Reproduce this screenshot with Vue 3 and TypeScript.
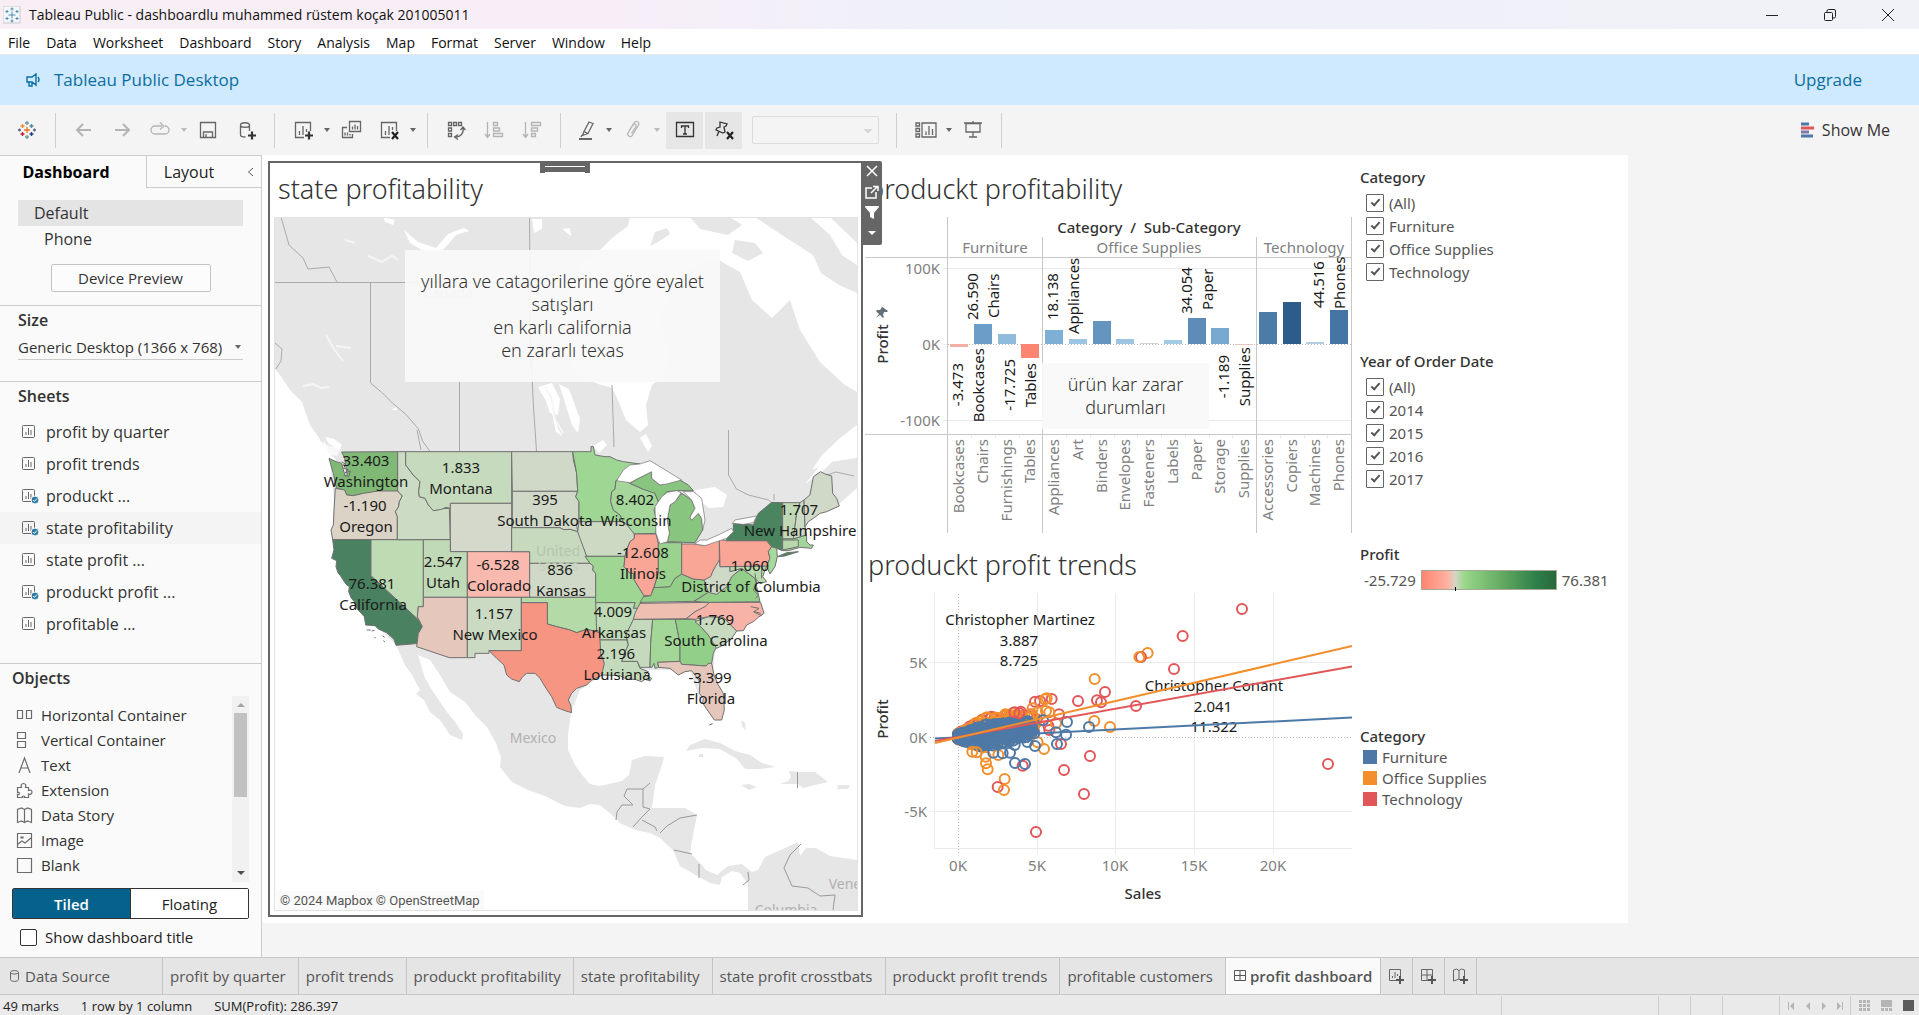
<script setup lang="ts">
interface Shape { p: string; c: string }
interface Label { x: number; y: number; t: string }
interface Tool { icon?: string; caret?: boolean; sep?: boolean; dim?: boolean; on?: boolean; narrow?: boolean; label?: string }

const menu = ['File', 'Data', 'Worksheet', 'Dashboard', 'Story', 'Analysis', 'Map', 'Format', 'Server', 'Window', 'Help']

const icons: Record<string, string> = {
  back: 'M18 11H4M10 5l-6 6 6 6',
  forward: 'M4 11h14M12 5l6 6-6 6',
  redo: 'M13 7H6a4 4 0 0 0 0 8h10a4 4 0 0 0 4-4 4 4 0 0 0-4-4M11 3.500l4 3.500-4 3.500',
  save: 'M3.500 3.500h15v15h-15zM6.500 18v-5h9v5M9 15v3',
  dataAdd: 'M5.500 6c0-3 9-3 9 0s-9 3-9 0v10c0 1 2 2 5 2M14.500 6v6',
  sheetAdd: 'M12 18.500H3.500v-15h15V12M7.500 16v-4M11 16V7M14.500 13v-3',
  duplicate: 'M9.500 2.500h11v10h-11zM12.500 10.500v-3M15 10.500v-5M17.500 10.500V7M7 8.500H2.500v10h10V15M5 16.500v-3M7.500 16.500v-3M10 16.500V15',
  clear: 'M12 18.500H3.500v-15h15V12M7.500 16v-4M11 16V7M14.500 11v-3',
  swap: 'M3.500 3.500h3v3h-3zM8.500 3.500h3v3h-3zM13.500 3.500h3v3h-3zM3.500 9h3v3h-3zM3.500 14.500h3v3h-3zM18 9c1 5-2 9-8 9M15.500 11l2.500-3 2.500 3M13 15.500L9.500 18l3.500 2.500',
  sortAsc: 'M4.500 3v15M2 15l2.500 3.500L7 15M10.500 3.500h4v3h-4zM10.500 9h6v3h-6zM10.500 14.500h9v3h-9z',
  sortDesc: 'M4.500 3v15M2 15l2.500 3.500L7 15M10.500 3.500h9v3h-9zM10.500 9h6v3h-6zM10.500 14.500h4v3h-4z',
  highlight: 'M13 3l4 1.500-5 10-4-2zM8 12.500l-1.500 4 5.500-2M6 16l-1 2',
  clip: 'M7 12l5-8c2-3 6-1 4.500 2l-6 10c-1.500 3-6 1-4.500-2l5-8c1.500-2 4-.5 3 1.500l-4.500 7',
  label: 'M2.500 3.500h17v14h-17zM7.500 9V7h7v2M11 7v8M9 15h4',
  pin: 'M7 3l7 2-1 2-2 1 1 5-2 1-7-3 1-2 3-1zM6 12l-2 5',
  showHide: 'M2 4h3.500v3H2zM2 9.500h3.500v3H2zM2 15h3.500v3H2zM8 4h14v14H8zM12 16v-3.500M15 16V7M18.500 16v-6',
  present: 'M2 4h18M4 4.500h14v8.500H4zM11 2v2M11 13v5M7 18h8',
}
const tools: Tool[] = [
  { icon: 'back', dim: true, label: 'Undo' }, { icon: 'forward', dim: true, label: 'Redo' },
  { icon: 'redo', dim: true, label: 'Replay' }, { caret: true, dim: true }, { icon: 'save', label: 'Save' },
  { icon: 'dataAdd', label: 'New data source' }, { sep: true },
  { icon: 'sheetAdd', label: 'New worksheet' }, { caret: true }, { icon: 'duplicate', label: 'Duplicate' },
  { icon: 'clear', label: 'Clear' }, { caret: true }, { sep: true },
  { icon: 'swap', label: 'Swap' }, { icon: 'sortAsc', dim: true, label: 'Sort ascending' },
  { icon: 'sortDesc', dim: true, label: 'Sort descending' }, { sep: true },
  { icon: 'highlight', narrow: true, label: 'Highlight' }, { caret: true }, { icon: 'clip', dim: true, label: 'Group' },
  { caret: true, dim: true }, { icon: 'label', on: true, label: 'Show labels' }, { icon: 'pin', on: true, label: 'Fix axes' },
]

const sheets = [
  { t: 'profit by quarter', used: false }, { t: 'profit trends', used: false }, { t: 'produckt ...', used: true },
  { t: 'state profitability', used: true }, { t: 'state profit ...', used: false },
  { t: 'produckt profit ...', used: true }, { t: 'profitable ...', used: false },
]
const objects = [
  { t: 'Horizontal Container', d: 'M1.500 4.500h5v8h-5zM10.500 4.500h5v8h-5z' },
  { t: 'Vertical Container', d: 'M1.500 1.500h8v6h-8zM1.500 10.500h8v6h-8z' },
  { t: 'Text', d: 'M3 17L8.500 2 14 17M5 12h7' },
  { t: 'Extension', d: 'M1.500 6.500h4c-1-2 0-4 2-4s3 2 2 4h3v3c2-1 3.500 0 3.500 1.500S14.500 14 12.500 13v3.500H8.500c1-2-3-2-2 0h-5v-3c2 1 3-3 0-2z' },
  { t: 'Data Story', d: 'M8.500 3.500l-3-1.500-4 1.500v13l4-1.500 3 1.500 3-1.500 4 1.500v-13l-4-1.500zM8.500 3.500v13' },
  { t: 'Image', d: 'M1.500 2.500h14v14h-14zM2 13l4-3 3 2 6-5M5 6h2v1H5z' },
  { t: 'Blank', d: 'M1.500 2.500h14v14h-14z' },
]
const tabs = ['profit by quarter', 'profit trends', 'produckt profitability', 'state profitability', 'state profit crosstbats', 'produckt profit trends', 'profitable customers']

const west: Shape[] = [
  { p: '57,85 78,95 95,100 100,120 106,138 112,136 108,112 104,85 95,66 263,65 263,183 240,186 205,183 190,188 160,190 130,197 110,195 104,180 80,175 77,165 70,130', c: '#80b876' },
  { p: '76,175 104,180 110,195 130,197 160,190 205,183 263,183 277,198 268,215 266,230 256,245 262,260 262,329 68,329 63,300 70,285 72,240', c: '#dbd3c5' },
  { p: '68,329 183,329 183,437 328,572 337,590 325,610 329,640 258,646 252,628 230,608 205,597 195,587 167,585 163,560 140,535 133,515 124,505 116,485 118,470 108,463 90,435 84,428 78,410 80,392 65,385 72,360', c: '#4a8160' },
  { p: '183,329 340,329 340,530 325,530 322,560 328,572 183,437', c: '#bfdbb4' },
  { p: '263,65 287,65 287,105 310,135 330,155 326,185 328,200 345,205 355,225 370,242 395,236 418,235 421,329 262,329 262,260 256,245 266,230 268,215 277,198 263,183', c: '#ccdbc3' },
  { p: '287,65 605,65 605,220 421,220 421,235 408,232 395,238 370,242 355,225 345,205 328,200 326,185 330,155 310,135 287,105', c: '#c6dabd' },
  { p: '421,220 605,220 605,365 421,365', c: '#d4d9cb' },
  { p: '340,329 421,329 421,365 472,365 472,502 340,502', c: '#c0d9b6' },
  { p: '472,365 659,365 659,502 472,502', c: '#f9b9ae' },
  { p: '340,502 472,502 472,683 418,683 320,650 325,610 337,590 322,560 325,530 340,530', c: '#e5c8bb' },
  { p: '472,502 634,502 634,662 537,662 537,670 495,670 495,683 472,683', c: '#cbdbc3' },
  { p: '605,65 788,65 790,90 800,130 803,184 607,184', c: '#d0d9c7' },
  { p: '607,184 803,184 797,200 807,215 807,275 800,285 803,305 780,298 760,299 750,293 607,293', c: '#d0d9c7' },
  { p: '605,293 750,293 760,299 780,298 803,305 815,325 825,360 832,385 840,400 659,400 659,365 605,365', c: '#c7dabd' },
  { p: '659,400 840,400 850,408 848,420 857,430 857,502 659,502', c: '#d0d9c7' },
  { p: '634,502 857,502 862,560 860,605 830,598 800,608 780,600 740,590 712,582 712,518 634,518', c: '#b4daa8' },
  { p: '634,518 712,518 712,582 740,590 780,600 800,608 830,598 860,605 871,610 872,670 884,700 878,735 845,750 830,765 800,775 785,790 775,810 782,825 785,848 765,842 740,832 725,800 705,770 690,745 675,730 650,730 638,740 628,755 605,747 590,735 582,705 560,685 537,662 634,662', c: '#f69682' },
]
const east: Shape[] = [
  { p: '-22,65 33,65 33,50 40,50 45,75 75,80 90,80 110,90 130,95 180,102 150,120 108,152 105,178 95,185 92,215 100,240 120,255 130,275 -3,275 -3,215 -13,200 -7,184 -10,130', c: '#9ed693' },
  { p: '108,152 130,150 150,160 190,178 215,182 225,190 235,215 222,240 230,270 228,310 163,312 150,300 145,290 130,275 120,255 100,240 92,215 95,185 105,178', c: '#a5d69a' },
  { p: '-3,275 130,275 145,290 163,312 163,325 150,335 140,360 135,379 20,379 0,325 -7,305', c: '#ccdac3' },
  { p: '15,379 135,379 132,410 150,430 162,430 160,445 178,475 192,497 188,515 180,535 160,535 165,518 47,518 47,430 38,420 40,408 30,400', c: '#a0d694' },
  { p: '47,518 165,518 160,535 180,535 175,548 160,570 145,600 138,610 140,630 60,630 60,605 50,602', c: '#bfdbb5' },
  { p: '60,630 140,630 145,645 138,660 125,694 172,694 180,715 205,725 195,735 215,745 210,753 195,748 185,755 165,748 140,748 120,737 65,735 73,700 62,670', c: '#c3dabb' },
  { p: '160,568 218,568 212,640 210,712 180,712 172,694 125,694 138,660 145,645 138,610 145,600', c: '#c5dabd' },
  { p: '218,568 286,568 300,640 300,694 233,697 236,712 225,715 222,700 216,712 210,712 212,640', c: '#a3d798' },
  { p: '286,568 345,568 362,590 385,615 410,650 400,670 395,700 385,702 378,708 305,703 300,694 300,640', c: '#92cf88' },
  { p: '233,697 300,694 305,703 378,708 385,700 395,700 402,735 415,765 430,790 433,840 425,870 403,870 375,830 368,818 370,805 358,790 360,755 335,722 315,725 295,735 270,715 236,712', c: '#e4c7ba' },
  { p: '345,575 385,560 430,562 470,603 455,625 430,645 410,655 385,615 362,590', c: '#c8dbc0' },
  { p: '388,517 542,517 552,550 535,562 520,575 500,585 490,602 470,603 430,562 385,560 345,568 318,566 345,545', c: '#f7b3a8' },
  { p: '180,520 388,517 375,530 345,545 318,566 160,568 165,550', c: '#efbfb2' },
  { p: '180,518 190,500 212,497 222,473 270,470 285,445 305,432 340,447 372,450 385,487 342,514 190,517', c: '#93ce89' },
  { p: '342,514 365,500 385,487 410,490 440,470 455,440 485,415 505,430 525,445 530,470 540,515 388,517', c: '#94cf8a' },
  { p: '418,385 420,410 450,410 450,425 485,415 455,440 440,470 410,493 385,487 372,450 400,420', c: '#cfd9c8' },
  { p: '450,410 560,408 548,440 560,455 540,460 525,445 505,430 485,415 450,425', c: '#b7dbab' },
  { p: '163,312 228,312 235,340 235,430 222,470 212,497 192,497 178,475 160,445 162,430 150,430 132,410 135,379 140,360 150,335 163,325', c: '#f9a697' },
  { p: '235,338 305,338 305,432 285,445 270,470 222,473 235,430', c: '#9ad28e' },
  { p: '305,342 345,342 375,347 418,328 418,390 400,420 392,440 372,450 340,447 305,432', c: '#f9a697' },
  { p: '262,335 345,338 368,300 365,265 355,250 335,270 330,262 345,235 335,210 305,190 285,215 270,225 262,270 268,310', c: '#88c57e' },
  { p: '150,160 175,145 215,125 215,145 240,165 300,150 325,165 340,182 300,182 260,185 235,215 225,190 190,178', c: '#88c57e' },
  { p: '418,328 440,332 560,332 575,350 565,365 570,385 560,408 420,410', c: '#f9a697' },
  { p: '440,325 460,305 460,280 520,285 535,250 575,217 608,218 607,362 590,355 575,350 560,332 440,332', c: '#4a855f' },
  { p: '592,380 620,368 655,365 615,378', c: '#4a855f' },
  { p: '575,350 590,355 592,380 585,410 570,432 560,408 570,385 565,365', c: '#a8d99c' },
  { p: '608,218 660,218 650,250 640,327 608,327', c: '#c0d8b6' },
  { p: '660,218 672,210 675,290 680,315 640,327 650,250', c: '#ccdbc3' },
  { p: '672,210 690,195 700,140 722,125 735,132 755,138 758,190 770,205 778,228 740,245 720,250 700,265 685,275 675,290', c: '#d0d9c7' },
  { p: '608,327 640,327 680,315 680,335 690,345 700,345 695,355 660,352 625,362 608,362', c: '#a3d69a' },
  { p: '608,330 655,330 655,350 608,360', c: '#b6d8ab' },
]
const lakes = [
  '110,152 130,120 150,105 180,102 210,92 305,150 260,162 240,165 215,145 215,125 175,145 150,158',
  '225,230 245,200 262,187 290,182 303,188 285,215 270,225 262,270 268,310 262,335 240,342 228,310',
  '310,185 340,185 365,205 375,270 368,300 365,265 355,250 335,270 330,262 345,235 335,210',
  '345,342 375,347 440,325 460,305 455,295 415,315 380,330 360,330',
  '457,280 465,270 530,258 520,278 490,283',
]
const mapLabels: Label[] = [
  { x: 366, y: 466, t: '33.403' }, { x: 366, y: 487, t: 'Washington' }, { x: 461, y: 473, t: '1.833' }, { x: 461, y: 494, t: 'Montana' },
  { x: 365, y: 511, t: '-1.190' }, { x: 366, y: 532, t: 'Oregon' }, { x: 545, y: 505, t: '395' }, { x: 545, y: 526, t: 'South Dakota' },
  { x: 443, y: 567, t: '2.547' }, { x: 443, y: 588, t: 'Utah' }, { x: 498, y: 570, t: '-6.528' }, { x: 499, y: 591, t: 'Colorado' },
  { x: 560, y: 575, t: '836' }, { x: 561, y: 596, t: 'Kansas' }, { x: 372, y: 589, t: '76.381' }, { x: 373, y: 610, t: 'California' },
  { x: 494, y: 619, t: '1.157' }, { x: 495, y: 640, t: 'New Mexico' }, { x: 635, y: 505, t: '8.402' }, { x: 636, y: 526, t: 'Wisconsin' },
  { x: 643, y: 558, t: '-12.608' }, { x: 643, y: 579, t: 'Illinois' }, { x: 613, y: 617, t: '4.009' }, { x: 614, y: 638, t: 'Arkansas' },
  { x: 616, y: 659, t: '2.196' }, { x: 617, y: 680, t: 'Louisiana' }, { x: 799, y: 515, t: '1.707' }, { x: 800, y: 536, t: 'New Hampshire' },
  { x: 750, y: 571, t: '1.060' }, { x: 751, y: 592, t: 'District of Columbia' }, { x: 715, y: 625, t: '1.769' }, { x: 716, y: 646, t: 'South Carolina' },
  { x: 710, y: 683, t: '-3.399' }, { x: 711, y: 704, t: 'Florida' },
]

const bars = [
  { n: 'Bookcases', h: -3, c: '#f4b0a6' }, { n: 'Chairs', h: 20, c: '#6b9dc8' }, { n: 'Furnishings', h: 10, c: '#8fbbdc' }, { n: 'Tables', h: -14, c: '#fb8570' },
  { n: 'Appliances', h: 14, c: '#7fafd5' }, { n: 'Art', h: 5, c: '#9dc5e2' }, { n: 'Binders', h: 23, c: '#6594bf' }, { n: 'Envelopes', h: 5, c: '#9dc5e2' },
  { n: 'Fasteners', h: 1, c: '#cfd4d8' }, { n: 'Labels', h: 4, c: '#a4cbe5' }, { n: 'Paper', h: 26, c: '#5e8cb9' }, { n: 'Storage', h: 16, c: '#78aad1' },
  { n: 'Supplies', h: -1, c: '#e8c6bf' }, { n: 'Accessories', h: 32, c: '#4c7ba8' }, { n: 'Copiers', h: 42, c: '#2e5c8a' }, { n: 'Machines', h: 2, c: '#b5cfe0' },
  { n: 'Phones', h: 34, c: '#4575a5' },
].map((b, i) => ({ ...b, x: Math.round(950 + i * 23.75) }))
const above: Label[] = [
  { x: 978, y: 320, t: '26.590' }, { x: 999, y: 318, t: 'Chairs' }, { x: 1058, y: 320, t: '18.138' }, { x: 1079, y: 334, t: 'Appliances' },
  { x: 1192, y: 314, t: '34.054' }, { x: 1213, y: 310, t: 'Paper' }, { x: 1324, y: 308, t: '44.516' }, { x: 1345, y: 309, t: 'Phones' },
]
const below: Label[] = [
  { x: 963, y: 363, t: '-3.473' }, { x: 984, y: 348, t: 'Bookcases' }, { x: 1015, y: 359, t: '-17.725' }, { x: 1036, y: 363, t: 'Tables' },
  { x: 1229, y: 355, t: '-1.189' }, { x: 1250, y: 347, t: 'Supplies' },
]

const orange = '#f28e2b'
const red = '#e15759'
const blue = '#4e79a7'
let seed = 7
const rnd = () => { seed = (seed * 16807) % 2147483647; return seed / 2147483647 }
// Most orders are small, so the points thin out with growing sales and fan out around zero profit.
const cluster = (n: number, c: string, length: number, up: number, down: number, rise: number) =>
  Array.from({ length: n }, () => {
    const t = Math.pow(rnd(), 2.3)
    const x = 294 + t * length
    const side = rnd() < 0.55 ? -up : down
    const fan = Math.min(1, 0.16 + t * 2.4) * (side > 0 ? 1.1 - t * 0.7 : 1)
    return [x, 588 + side * Math.pow(rnd(), 1.2) * fan - t * rise, c] as const
  })
const dots = [
  ...cluster(170, red, 240, 48, 20, 34),
  ...cluster(240, orange, 235, 46, 56, 34),
  ...cluster(400, blue, 225, 28, 48, 18),
  ...([
    [525, 485, red], [540, 483, red], [575, 477, red], [597, 523, red], [565, 557, red], [568, 570, red], [463, 517, red], [478, 520, red],
    [518, 505, orange], [560, 475, orange], [555, 478, orange], [533, 517, orange], [558, 513, orange], [568, 517, orange], [588, 550, orange],
    [533, 607, orange], [552, 627, orange], [703, 543, orange], [704, 417, orange], [750, 561, orange], [863, 339, orange],
    [337, 635, orange], [350, 637, orange], [377, 650, orange], [378, 670, orange], [383, 688, orange], [415, 645, orange],
    [434, 717, orange], [413, 741, red], [432, 750, orange], [654, 483, red], [735, 456, red], [711, 481, red], [723, 487, red],
    [843, 351, red], [838, 351, orange], [942, 387, red], [968, 288, red], [1146, 207, red], [828, 498, red], [1404, 672, red],
    [690, 648, red], [612, 690, red], [672, 762, red], [528, 876, red], [603, 612, red], [488, 677, red],
    [549, 541, blue], [500, 545, blue], [621, 546, blue], [687, 561, blue], [588, 577, blue], [618, 584, blue], [591, 612, blue],
    [525, 618, blue], [502, 606, blue], [464, 615, blue], [400, 638, blue], [428, 640, blue], [450, 638, blue], [465, 669, blue], [495, 672, blue], [523, 580, blue],
  ] as [number, number, string][]),
]
</script>

<template>
  <div class="app">
    <header class="titlebar">
      <svg class="logo-sm" width="18" height="18" viewBox="0 0 18 18"><rect width="17" height="17" fill="#f3f6f9" stroke="#c9c9c9" /><path d="M9 5.500v7M5.500 9h7M9 1.500v3M7.500 3h3M9 13.500v3M7.500 15h3M4 4v3M2.500 5.500h3M14 4v3M12.500 5.500h3M4 11v3M2.500 12.500h3M14 11v3M12.500 12.500h3" stroke="#4b8db4" /></svg>
      <span>Tableau Public - dashboardlu muhammed rüstem koçak 201005011</span>
      <div class="win">
        <button aria-label="Minimize"><svg width="14" height="14"><path d="M1 7.500h12" stroke="#222" /></svg></button>
        <button aria-label="Restore"><svg width="14" height="14" fill="none" stroke="#222"><rect x="1.500" y="4.500" width="8" height="8" rx="1" /><path d="M4 4V3q0-1.500 1.500-1.500H11q1.500 0 1.500 1.500v5.500Q12.500 10 11 10h-1" /></svg></button>
        <button aria-label="Close"><svg width="14" height="14"><path d="M1 1l12 12M13 1L1 13" stroke="#222" /></svg></button>
      </div>
    </header>
    <nav class="menubar"><a v-for="m in menu" :key="m" href="#">{{ m }}</a></nav>
    <div class="banner">
      <svg width="14" height="14" fill="none" stroke="#0b6ea0" stroke-width="1.400"><path d="M10 1v11L6 9H1V4h5zM3 9v4h3V9M12 4q2 3 0 5" /></svg>
      <span>Tableau Public Desktop</span>
      <a href="#">Upgrade</a>
    </div>
    <div class="toolbar">
      <button class="tool" aria-label="Start page">
        <svg width="18" height="18" viewBox="0 0 18 18" fill="none" stroke-width="1.400">
          <path d="M9 6v6M6 9h6" stroke="#e8762d" /><path d="M9 0v4M7 2h4M9 14v4M7 16h4" stroke="#7199a6" />
          <path d="M4.500 3v4M2.500 5h4" stroke="#eb912c" /><path d="M13.500 3v4M11.500 5h4" stroke="#59879b" />
          <path d="M4.500 11v4M2.500 13h4" stroke="#c72035" /><path d="M13.500 11v4M11.500 13h4" stroke="#1f457e" /><path d="M0 9h3M1.500 7.500v3M15 9h3M16.500 7.500v3" stroke="#5b6591" />
        </svg>
      </button>
      <i class="sep"></i>
      <template v-for="(t, i) in tools" :key="i">
        <i v-if="t.sep" class="sep"></i>
        <i v-else-if="t.caret" class="caret" :class="{ dim: t.dim }"></i>
        <button v-else class="tool" :class="{ dim: t.dim, on: t.on, narrow: t.narrow }" :aria-label="t.label">
          <svg width="22" height="22" viewBox="0 0 22 22" fill="none" stroke="currentColor" :stroke-width="t.icon === 'back' || t.icon === 'forward' ? 2 : 1.3">
            <path :d="icons[t.icon!]" />
            <path v-if="t.icon === 'dataAdd' || t.icon === 'sheetAdd'" d="M17 12.500v8M13 16.500h8" stroke="#333" stroke-width="2.200" />
            <path v-if="t.icon === 'clear' || t.icon === 'pin'" d="M14 13l6 7M20 13l-6 7" stroke="#222" stroke-width="2.200" />
            <path v-if="t.icon === 'highlight'" d="M3 20h13" stroke-width="2" />
          </svg>
        </button>
      </template>
      <select class="fit" disabled aria-label="Fit"></select>
      <i class="sep"></i>
      <button class="tool" aria-label="Show or hide cards"><svg width="23" height="22" viewBox="0 0 23 22" fill="none" stroke="currentColor" stroke-width="1.300"><path :d="icons.showHide" /></svg></button>
      <i class="caret"></i>
      <button class="tool" aria-label="Presentation mode"><svg width="22" height="22" viewBox="0 0 22 22" fill="none" stroke="currentColor" stroke-width="1.300"><path :d="icons.present" /></svg></button>
      <i class="sep"></i>
      <button class="showme">
        <svg width="16" height="16"><path d="M1 2h8" stroke="#4e79a7" stroke-width="3" /><path d="M1 6h13" stroke="#e15759" stroke-width="3" /><path d="M1 10h8" stroke="#7d7aa5" stroke-width="3" /><path d="M1 14h12" stroke="#4e79a7" stroke-width="3" /></svg>
        Show Me
      </button>
    </div>

    <main class="main">
      <aside class="side">
        <div class="sidetabs"><button class="cur">Dashboard</button><button class="lay">Layout</button><button class="fold" aria-label="Collapse"><svg width="7" height="10" fill="none" stroke="#555"><path d="M6 1L1.500 5 6 9" /></svg></button></div>
        <section class="devices">
          <div class="row sel">Default</div>
          <div class="row phone">Phone</div>
          <button class="preview">Device Preview</button>
        </section>
        <section class="size">
          <h3>Size</h3>
          <button class="drop"><span>Generic Desktop (1366 x 768)</span><i class="caret"></i></button>
        </section>
        <section class="sheets">
          <h3>Sheets</h3>
          <ul>
            <li v-for="s in sheets" :key="s.t" :class="{ hl: s.t === 'state profitability' }">
              <svg width="18" height="18" fill="none" stroke="#666"><rect x=".5" y="2.500" width="12" height="12" rx="1" /><path d="M4 12V9M6.500 12V5M9 12V7" /><g v-if="s.used"><circle cx="13" cy="13" r="4" fill="#2e7ba3" stroke="#fafafa" /><path d="M11 13l1.500 1.500 2.500-3" stroke="#fff" /></g></svg>
              {{ s.t }}
            </li>
          </ul>
        </section>
        <section class="objects">
          <h3>Objects</h3>
          <div class="objlist">
            <ul>
              <li v-for="o in objects" :key="o.t"><svg width="18" height="18" fill="none" stroke="#6b6b6b" stroke-width="1.200"><path :d="o.d" /></svg>{{ o.t }}</li>
            </ul>
            <div class="scroll"><i class="up"></i><i class="thumb"></i><i class="down"></i></div>
          </div>
          <div class="mode"><button class="tiled">Tiled</button><button>Floating</button></div>
          <label class="show"><input type="checkbox" />Show dashboard title</label>
        </section>
      </aside>

      <div class="canvas">
        <div class="dash">
          <div class="mapcell">
            <section class="mapcard">
              <h2>state profitability</h2>
              <svg class="map" viewBox="274 217 584 694">
                <g fill="#e6e6e6">
                  <path d="M274 217H630L628 226 612 238 600 250 585 262 570 285 560 320 562 350 575 372 598 384 612 388 618 400 626 420 640 432 648 425 646 405 652 385 664 375 668 350 660 320 672 290 690 268 715 258 740 272 752 300 772 318 790 300 800 330 820 362 845 385 857 392V425L840 438 822 455 812 470 830 462 857 458V488L838 505 815 512 800 525 785 545 760 560 745 610 715 650 712 690 700 700 690 670 650 670 610 670 580 690 571 712 568 735 568 750 575 765 583 776 590 784 600 786 622 781 629 775 632 760 645 756 664 757 662 765 655 785 652 808 670 808 685 808 697 815 692 840 690 853 699 862 706 870 717 875 728 866 742 864 752 872 758 870 765 857 785 848 798 842 800 856 806 848 816 848 830 856 857 860V910H748V884L740 873 732 871 722 877 720 885 710 883 692 873 680 866 673 850 660 838 650 833 635 830 620 823 612 815 600 805 590 804 580 808 565 806 545 796 528 790 512 782 500 767 501 758 496 743 487 727 475 715 465 702 450 692 440 675 430 660 418 655 425 678 432 690 440 702 447 712 455 722 463 734 462 740 450 735 440 720 430 712 424 700 416 694 420 690 412 675 405 665 396 645 360 610 336 560 334 500 330 462 340 458 336 450 322 442 310 425 302 402 290 390 280 375 274 368z" />
                  <path d="M318 436l14 6 10 12 4 10-8-3-12-10z" />
                  <path d="M686 751l4-6 15-6 15 4 15 8 15 4 12 8 14 4-16 2-15 0-8-10-17-10-18-1z" />
                  <path d="M789 771l11 1h15l13 10-13 3-12 3-5-4h-18l8-3 3-4z" /><path d="M741 785l8-1 8 3-8 3zM838 785h12l-2 4h-11zM741 720l4 3 1 8-4-5zM699 754h4v3h-4z" />
                  <path d="M690 217h40l12 8-14 10-28-6zM755 217h55l20 18 12 20 15 10v28l-18-8-18-12-8-18-28-18zM830 217h27v26z" />
                  <path d="M655 232l12-4 3 6-12 8-8 4zM735 240l20 3 8 10-15 8-16-8z" />
                </g>
                <g fill="#fff">
                  <path d="M404 230l14 12 18 6 12-14 16-6 5 3-13 4-12 14-14 6-20-12zM383 217l12 3-2 5-8-3zM532 219h10v10l-8 4zM562 229l8-1 1 8zM538 387l14-4 8 16-2 16-8-2-4-12zM549 400l9 28 4 8-6-4zM559 384l10 5 11 30-2 14-6-8zM325 437l9 2 8 6-3 5-10-6zM324 440l5 14-5 4zM396 407l1 3h-5z" />
                  <path d="M593 446l10-6 4 5-8 8zM640 438l6-4 6 12-4 6zM695 490l20-3 12 8-4 12-14 1-10-8zM805 484l18-22 16-20 10-3-10 16-18 18z" />
                  <path d="M305 432l24 14 12 2-4 8-12-2-10-10z" opacity=".7" />
                </g>
                <g fill="none" stroke="#f5f5f5"><path d="M326 335l8 14 9 12M336 346l15 2M303 386l10-2 8 4 8-1M368 256l14 6 10-6 6 4M345 240l10 3M545 387l6 10 4 22 8 14M430 288l22 4" stroke-width="2" /></g>
                <g fill="none" stroke="#aaa">
                  <path d="M281 217l8 28 14 13 5 11 21-2 8 15M274 282.500h258M370.500 282v101l12 10 10 10 14 12 12 14 4 12 13 18M529.500 217l1 130 3 60 3 44M459.500 380v72M417 430l4 20M728.500 430v45l8 14 12 6 20 5 6 5M275 343l7 6-1 12-5 8M612 385l2 62M774 500v-6M810 492l8-14 18-6 18 4" />
                  <path d="M616 820l1-8 5-7h11l-9-9 3-7h16v18l7 2-9 9-8 9M642 820l13 7 2 4M660 833l7-7 13-8 17-3M674 850l18 4M699 864v14M748 872l1 8-6 5M801 844l-11 11-6 13 8 18 16 2 12 8 15-1-2 15M797.500 772v16M643 789l7-6" stroke="#999" />
                </g>
                <g font-size="14" fill="#b0b0b0" text-anchor="middle" class="place"><text x="448" y="298">Canada</text><text x="533" y="743">Mexico</text><text x="845" y="889">Vene</text><text x="786" y="915">Columbia</text></g>
                <g stroke="#6f6f6f" stroke-width="3" stroke-linejoin="round">
                  <g transform="translate(310 430) scale(.33333)"><polygon v-for="(s, i) in west" :key="i" :points="s.p" :fill="s.c" /><path d="M95 95l12 8-6 12 14 4-10 10 16-6-4 16-14-2M170 600h12M185 603l8-2M193 622l4 2M218 618l6 4M220 632l5 4" fill="none" /></g>
                  <g transform="translate(580 430) scale(.33333)"><polygon v-for="(s, i) in east" :key="i" :points="s.p" :fill="s.c" /><polygon v-for="p in lakes" :key="p" :points="p" fill="#fff" stroke-width="2" /><path d="M525 430l5 30-10 20 15 15-8 10M545 410v35M512 530l25 5-15 10 20 5M520 545l25 12M388 885l10-4" fill="none" /></g>
                </g>
                <g font-size="14" fill="#b5c5ae" text-anchor="middle" class="place"><text x="558" y="556">United</text><text x="558" y="571" fill="#c3d0bc">States</text></g>
                <g font-size="15" fill="#1a1a1a" text-anchor="middle" class="viz"><text v-for="(l, i) in mapLabels" :key="i" :x="l.x" :y="l.y">{{ l.t }}</text></g>
                <rect x="274.500" y="217.500" width="583" height="693" fill="none" stroke="#e2e2e2" />
              </svg>
              <p class="credit">© 2024 Mapbox © OpenStreetMap</p>
              <div class="note eyalet">yıllara ve catagorilerine göre eyalet<br />satışları<br />en karlı california<br />en zararlı texas</div>
              <div class="grip"></div>
              <div class="cardtools">
                <button aria-label="Remove"><svg width="12" height="12"><path d="M1 1l10 10M11 1L1 11" stroke="#fff" stroke-width="1.500" /></svg></button>
                <button aria-label="Go to sheet"><svg width="14" height="14" fill="none" stroke="#fff" stroke-width="1.500"><path d="M7 3H1v10h10V7M6 8l6-6M8 1.500h5V6" /></svg></button>
                <button aria-label="Use as filter"><svg width="14" height="14"><path d="M0 1h14v1L9 8v6l-4-2V8L0 2z" fill="#fff" /></svg></button>
                <button aria-label="More"><svg width="10" height="6"><path d="M1 1h8L5 5z" fill="#fff" /></svg></button>
              </div>
            </section>
          </div>

          <div class="charts">
            <section class="barcard">
              <h2>produckt profitability</h2>
              <svg class="viz" viewBox="865 217 492 317" width="492" height="317">
                <g stroke="#ebebeb"><path d="M943 268.500h408M943 420.500h408M943 344.500h5" /><path v-for="b in bars" :key="b.n" :d="`M${b.x + 21.5} 435v3`" /></g>
                <g stroke="#c8c8c8"><path d="M947.500 217v316M1351.500 217v316M1042.500 237v296M1256.500 237v296M865 257.500h487M865 434.500h487" /></g>
                <path d="M948 344.500h403" stroke="#bbb" stroke-dasharray="1 2" />
                <rect v-for="b in bars" :key="b.n" :x="b.x" :y="b.h > 0 ? 344 - b.h : 344" width="18" :height="Math.abs(b.h)" :fill="b.c" />
                <g font-size="15" fill="#333" text-anchor="middle" class="med"><text x="1149" y="233">Category&#160; / &#160;Sub-Category</text><text transform="translate(888 344) rotate(-90)">Profit</text></g>
                <g font-size="15" fill="#808080" text-anchor="middle"><text x="995" y="253">Furniture</text><text x="1149" y="253">Office Supplies</text><text x="1304" y="253">Technology</text></g>
                <g font-size="15" fill="#808080" text-anchor="end">
                  <text x="940" y="274">100K</text><text x="940" y="350">0K</text><text x="940" y="426">-100K</text>
                  <text v-for="b in bars" :key="b.n" :transform="`translate(${b.x + 14} 439) rotate(-90)`">{{ b.n }}</text>
                </g>
                <g font-size="15" fill="#1a1a1a">
                  <text v-for="l in above" :key="l.t" :transform="`translate(${l.x} ${l.y}) rotate(-90)`">{{ l.t }}</text>
                  <text v-for="l in below" :key="l.t" text-anchor="end" :transform="`translate(${l.x} ${l.y}) rotate(-90)`">{{ l.t }}</text>
                </g>
                <path d="M881 306l7 5-1 1-3 0-1 3 1 2-1 1-3-3-4 3 3-4-3-3 1-1 3 0 2-3z" fill="#62707c" />
              </svg>
              <div class="note urun">ürün kar zarar<br />durumları</div>
            </section>
            <section class="scatter">
              <h2>produckt profit trends</h2>
              <svg class="viz" viewBox="865 585 492 325" width="492" height="325">
                <path d="M934.500 593v255.500H1352M930 662.500h422M930 811.500h422M1037.500 593v260M1115.500 593v260M1194.500 593v260M1273.500 593v260" fill="none" stroke="#ebebeb" />
                <path d="M958.500 594v259M930 737.500h422" stroke="#bbb" stroke-dasharray="1 2" />
                <g font-size="15" fill="#1a1a1a" text-anchor="middle">
                  <text x="1020" y="625">Christopher Martinez</text><text x="1019" y="646">3.887</text><text x="1019" y="666">8.725</text>
                  <text x="1214" y="691">Christopher Conant</text><text x="1213" y="712">2.041</text><text x="1214" y="732">11.322</text>
                </g>
                <g transform="translate(860 540) scale(.33333)" fill="none" stroke-width="6"><circle v-for="(d, i) in dots" :key="i" :cx="d[0]" :cy="d[1]" r="15" :stroke="d[2]" /></g>
                <g fill="none" stroke-width="2"><path d="M935 738.500L1352 717.500" :stroke="blue" /><path d="M935 741L1352 666.500" :stroke="red" /><path d="M935 743L1352 646" :stroke="orange" /></g>
                <g font-size="15" fill="#808080" text-anchor="middle"><text x="958" y="871">0K</text><text x="1037" y="871">5K</text><text x="1115" y="871">10K</text><text x="1194" y="871">15K</text><text x="1273" y="871">20K</text></g>
                <g font-size="15" fill="#808080" text-anchor="end"><text x="927" y="668">5K</text><text x="927" y="743">0K</text><text x="927" y="817">-5K</text></g>
                <g font-size="15" fill="#333" text-anchor="middle" class="med"><text x="1143" y="899">Sales</text><text transform="translate(888 719) rotate(-90)">Profit</text></g>
              </svg>
            </section>
          </div>

          <div class="legends">
            <fieldset class="filter cat"><legend>Category</legend><label v-for="c in ['(All)', 'Furniture', 'Office Supplies', 'Technology']" :key="c"><input type="checkbox" checked />{{ c }}</label></fieldset>
            <fieldset class="filter year"><legend>Year of Order Date</legend><label v-for="c in ['(All)', '2014', '2015', '2016', '2017']" :key="c"><input type="checkbox" checked />{{ c }}</label></fieldset>
            <section class="ramp"><h4>Profit</h4><div><span>-25.729</span><i class="bar"></i><span>76.381</span></div></section>
            <section class="keys"><h4>Category</h4><p><i :style="{ background: blue }"></i>Furniture</p><p><i :style="{ background: orange }"></i>Office Supplies</p><p><i :style="{ background: red }"></i>Technology</p></section>
          </div>
        </div>
      </div>
    </main>

    <nav class="tabs">
      <a class="source" href="#"><svg width="9" height="12" fill="none" stroke="#666"><path d="M.5 2.500c0-2.500 8-2.500 8 0v7c0 2.500-8 2.500-8 0zM.5 2.500c0 2 8 2 8 0" /></svg>Data Source</a>
      <a v-for="t in tabs" :key="t" href="#">{{ t }}</a>
      <a class="active" href="#"><svg width="13" height="12" fill="none" stroke="#555"><path d="M.5.5h11v10H.5zM.5 5.500h11M6 .5v10" /></svg>profit dashboard</a>
      <button aria-label="New worksheet"><svg width="17" height="17" fill="none" stroke="#666"><path d="M8 12.500H1.500v-11h11V8M4.500 10V8M7 10V4M9.500 8V6" /><path d="M12 8v8M8 12h8" stroke-width="2" stroke="#555" /></svg></button>
      <button aria-label="New dashboard"><svg width="17" height="17" fill="none" stroke="#666"><path d="M8 12.500H1.500v-11h11V8M1.500 7h11M7 1.500v11" /><path d="M12 8v8M8 12h8" stroke-width="2" stroke="#555" /></svg></button>
      <button aria-label="New story"><svg width="17" height="17" fill="none" stroke="#666"><path d="M8 12l-1-1-2.500 1-3 1V2l3-1L7 2.500 9.500 1l3 1v6M7 2.500V11" /><path d="M12 8v8M8 12h8" stroke-width="2" stroke="#555" /></svg></button>
    </nav>
    <footer class="status">
      <span>49 marks</span><span>1 row by 1 column</span><span>SUM(Profit): 286.397</span>
      <div class="cells"><i class="c1"></i><i class="c2"></i><i class="c2"></i><i class="c3"></i>
        <div class="nav"><svg width="60" height="8" fill="#b5b5b5"><path d="M1 0h1v8H1zM7 0v8L3 4zM23 0v8l-4-4zM35 0v8l4-4zM50 0v8l4-4zM55 0h1v8h-1z" /></svg></div>
        <div class="views"><svg width="60" height="11"><path d="M1 0h3v3H1zM5 0h3v3H5zM9 0h3v3H9zM1 4h3v3H1zM5 4h3v3H5zM9 4h3v3H9zM1 8h3v3H1zM5 8h3v3H5zM9 8h3v3H9zM23 0h11v7H23zM23 8h3v3h-3zM27 8h3v3h-3zM31 8h3v3h-3z" fill="#b5b5b5" /><path d="M45 0h11v11H45z" fill="#5c5c5c" /></svg></div>
      </div>
    </footer>
  </div>
</template>

<style>
body { overflow: hidden; }
</style>

<style scoped>
* { box-sizing: border-box; }
.app { display: flex; flex-direction: column; height: 100vh; background: #f4f4f4; color: #333; font: 15px/20px "Open Sans", "Noto Sans", sans-serif; }
button { border: 0; background: none; padding: 0; font: inherit; color: inherit; display: flex; align-items: center; justify-content: center; }
a { color: inherit; text-decoration: none; }
ul, p, h2, h3, h4 { margin: 0; padding: 0; list-style: none; }
svg { flex: none; }
.titlebar { height: 29px; display: flex; align-items: center; padding-left: 3px; gap: 8px; background: linear-gradient(90deg, #f8eef4, #f8eef8 30%, #eff1f8 50%, #f1f2f8); color: #111; font-size: 14px; }
.win { margin-left: auto; display: flex; padding-right: 2px; }
.win button { width: 58px; height: 29px; }
.menubar { height: 26px; display: flex; align-items: center; gap: 16px; padding: 2px 0 0 8px; background: #fff; color: #111; font-size: 14px; border-bottom: 1px solid #e8e8e8; }
.banner { height: 50px; display: flex; align-items: center; gap: 14px; padding: 0 57px 0 26px; background: #cfe9ff; color: #0b6ea0; font-size: 17px; }
.banner a { margin-left: auto; }
.toolbar { height: 50px; display: flex; align-items: center; padding-left: 8px; color: #666; }
.tool { width: 38px; height: 37px; }
.tool.narrow { width: 34px; }
.tool.dim { color: #b4b4b4; }
.tool.on { width: 37px; margin-right: 2px; background: #e6e6e6; color: #333; }
.caret + .on { margin-left: 4px; }
.sep { width: 1px; height: 35px; background: #cfcfcf; margin: 0 9px; }
.caret { width: 10px; display: flex; justify-content: center; }
.caret::after { content: ""; border: 3px solid transparent; border-top: 4px solid #666; border-bottom: 0; }
.caret.dim::after { border-top-color: #bbb; }
.fit { width: 127px; height: 28px; margin: 0 8px; appearance: none; border: 1px solid #d2d2d2; border-radius: 2px; background: no-repeat #f5f5f5; background-image: linear-gradient(45deg, transparent 50%, #ccc 50%), linear-gradient(-45deg, transparent 50%, #ccc 50%); background-size: 4px 4px; background-position: 111px 12px, 115px 12px; }
.showme { margin-left: auto; margin-right: 29px; gap: 6px; color: #333; font-size: 16px; }
.main { flex: 1; display: flex; min-height: 0; }
.side { width: 262px; flex: none; display: flex; flex-direction: column; background: #fafafa; border-right: 1px solid #ccc; border-top: 1px solid #ccc; }
.sidetabs { display: flex; height: 32px; }
.sidetabs .cur { width: 146px; padding-right: 14px; font-weight: 700; font-size: 16px; color: #000; }
.sidetabs .lay { flex: 1; padding-right: 8px; border-left: 1px solid #ccc; border-bottom: 1px solid #ccc; color: #222; font-size: 16px; }
.sidetabs .fold { width: 22px; border-bottom: 1px solid #ccc; }
.devices { height: 118px; padding: 12px 18px 0; border-bottom: 1px solid #ccc; font-size: 16px; }
.row { height: 26px; line-height: 26px; padding-left: 16px; }
.row.sel { background: #e4e4e4; }
.row.phone { padding-left: 26px; }
.preview { width: 160px; height: 28px; margin: 12px auto 0; border: 1px solid #c4c4c4; border-radius: 2px; background: #fcfcfc; font-size: 15px; }
h3 { font-size: 16px; line-height: 28px; font-weight: 600; }
.size { height: 76px; padding: 0 18px; border-bottom: 1px solid #ccc; }
.drop { width: 100%; height: 26px; justify-content: space-between; border-bottom: 1px solid #ccc; font-size: 15px; white-space: nowrap; }
.sheets { flex: 1; }
.sheets h3 { padding: 0 18px; margin-bottom: 6px; }
.sheets li { height: 32px; display: flex; align-items: center; gap: 6px; padding-left: 22px; font-size: 16px; }
.sheets li.hl { background: #f4f4f4; }
.objects { border-top: 1px solid #ccc; padding: 0 12px 11px; }
.objlist { display: flex; justify-content: space-between; height: 186px; margin-top: 4px; }
.objlist ul { padding-top: 6px; }
.objlist li { display: flex; align-items: center; height: 25px; gap: 7px; padding-left: 4px; }
.scroll { width: 17px; background: #f1f1f1; display: flex; flex-direction: column; align-items: center; }
.scroll .up { margin-top: 7px; border: 4px solid transparent; border-bottom-color: #a3a3a3; border-top: 0; }
.scroll .thumb { width: 13px; height: 84px; margin-top: 6px; background: #c1c1c1; }
.scroll .down { margin-top: auto; margin-bottom: 7px; border: 4px solid transparent; border-top-color: #505050; border-bottom: 0; }
.mode { display: flex; height: 31px; margin-top: 6px; border: 1px solid #333; border-radius: 2px; color: #222; }
.mode button { flex: 1; background: #fff; }
.mode .tiled { background: #05628c; color: #fff; font-weight: 600; border-right: 1px solid #333; }
.show { display: flex; align-items: center; gap: 8px; margin: 9px 0 0 8px; color: #222; line-height: 18px; }
.show input { appearance: none; width: 17px; height: 17px; margin: 0; border: 1px solid #333; border-radius: 2px; background: #fff; }
.canvas { flex: 1; min-width: 0; overflow: hidden; }
.dash { display: flex; width: 1366px; height: 768px; background: #fff; font-family: "Noto Sans", "Open Sans", sans-serif; }
.dash h2 { font-size: 27px; line-height: 36px; font-weight: 300; color: #333; }
.viz, .place { font-family: "Noto Sans", sans-serif; }
.viz { font-weight: 400; }
.med { font-weight: 500; }
.mapcell { width: 603px; padding: 6px 2px 6px 6px; }
.mapcard { position: relative; height: 756px; border: 2px solid #666; padding: 8px 3px 0 4px; }
.mapcard h2 { padding-left: 4px; height: 46px; }
.map { display: block; width: 100%; }
.credit { position: absolute; left: 6px; bottom: 5px; padding: 0 4px; background: #fafafa; color: #555; font: 13px/19px Roboto, sans-serif; }
.note { position: absolute; display: flow-root; text-align: center; color: #333; background: rgba(249, 249, 249, .93); font: 300 18px/23px "Noto Sans", sans-serif; }
.eyalet { left: 135px; top: 87px; width: 315px; height: 132px; padding-top: 20px; }
.grip { position: absolute; top: 0; left: 270px; width: 50px; height: 10px; background: #666; border: solid #666; border-width: 0 5px; }
.grip::before { content: ""; display: block; height: 5px; margin-top: 3px; border: solid #fff; border-width: 1px 0; }
.cardtools { position: absolute; z-index: 2; right: -21px; top: -2px; width: 21px; height: 84px; padding: 3px 0 5px; background: #666; border-radius: 0 2px 2px 0; display: flex; flex-direction: column; justify-content: space-between; }
.cardtools button { height: 14px; }
.charts { width: 492px; }
.charts h2 { padding-left: 3px; }
.charts svg { display: block; }
.barcard { position: relative; padding-top: 16px; height: 392px; }
.barcard h2 { height: 46px; }
.scatter h2 { height: 38px; }
.urun { left: 177px; top: 208px; width: 167px; height: 66px; padding-top: 10px; }
.legends { flex: 1; padding: 12px 0 0 3px; color: #555; }
.legends h4, .legends legend { padding: 0; font-size: 15px; line-height: 20px; font-weight: 500; color: #333; }
.filter { margin: 0; padding: 4px 0 0; border: 0; min-width: 0; }
.cat { height: 184px; }
.year { height: 193px; }
.filter label { display: flex; align-items: center; height: 23px; gap: 5px; padding-left: 6px; }
.filter input { appearance: none; width: 18px; height: 18px; margin: 0; border: 1px solid #666; border-radius: 1px; position: relative; }
.filter input::after { content: ""; position: absolute; left: 6px; top: 2px; width: 3px; height: 7px; border: solid #555; border-width: 0 2px 2px 0; transform: rotate(42deg); }
.ramp { height: 182px; }
.ramp div { display: flex; align-items: center; gap: 5px; padding: 6px 0 0 4px; }
.bar { position: relative; width: 136px; height: 20px; border: 1px solid #a8a898; background: linear-gradient(90deg, #fb8570, #ffb1a2 19%, #d5d5c5 25%, #97d788 32%, #5fa65f 62%, #2d8049 85%, #29683c); }
.bar::after { content: ""; position: absolute; left: 33px; bottom: -2px; width: 1px; height: 4px; background: #000; }
.keys p { display: flex; align-items: center; gap: 5px; height: 21px; padding-left: 3px; }
.keys i { width: 14px; height: 14px; }
.tabs { height: 37px; display: flex; background: #e5e5e5; border-top: 1px solid #c8c8c8; color: #555; font-size: 15px; }
.tabs a { display: flex; align-items: center; padding: 0 12px 0 7px; border-right: 1px solid #c4c4c4; white-space: nowrap; }
.tabs .source { width: 163px; gap: 6px; padding-left: 10px; }
.tabs .active { background: #fafafa; font-weight: 600; gap: 3px; padding: 0 8px; }
.tabs button { width: 32px; border-right: 1px solid #c4c4c4; }
.status { height: 21px; display: flex; align-items: center; gap: 22px; padding: 1px 0 0 3px; background: #eaeaea; border-top: 1px solid #c8c8c8; color: #222; font-size: 13px; }
.cells { margin-left: auto; display: flex; height: 100%; }
.cells > * { border-left: 1px solid #ccc; }
.c1 { width: 157px; } .c2 { width: 32px; } .c3 { width: 57px; }
.nav, .views { display: flex; align-items: center; padding-left: 7px; width: 71px; }
.cells .views { width: 69px; }
</style>
